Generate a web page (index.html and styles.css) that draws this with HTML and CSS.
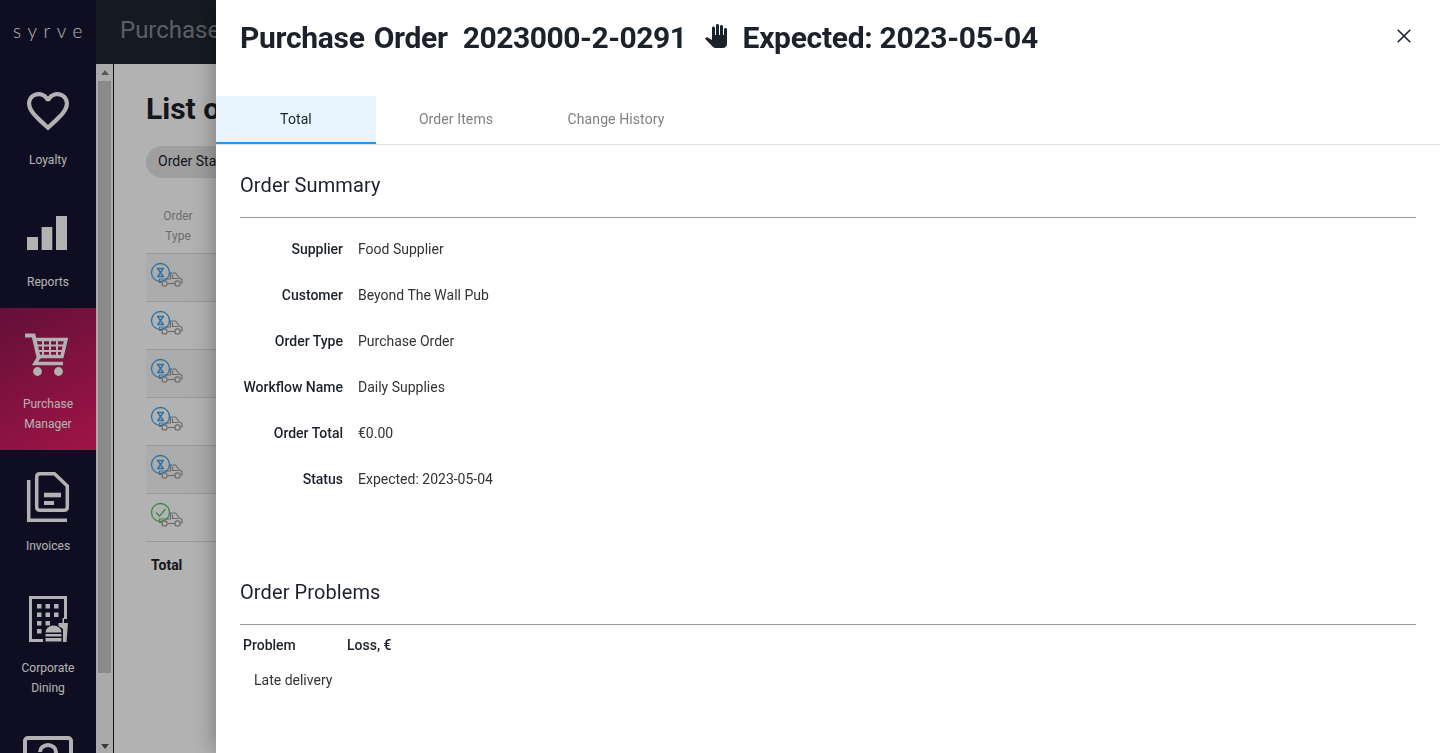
FILE: index.html
```html
<!DOCTYPE html>
<html lang="en">
<head>
<meta charset="UTF-8">
<meta name="viewport" content="width=device-width, initial-scale=1.0">
<title>Purchase Order</title>
<link rel="stylesheet" href="styles.css">
</head>
<body>

<svg class="defs" width="0" height="0">
  <symbol id="truck" viewBox="0 0 34 26">
    <g fill="none" stroke="#9a9a9a" stroke-width="1.200">
      <path d="M11 20.500H9.500V17H20.500V11H25.500L29.500 16C31 16.300 32 17 32 18.500V21H30.500"/>
      <path d="M22.500 12.500V16.500H28.500"/>
      <path d="M18 21.500H25"/>
      <circle cx="14.500" cy="21.500" r="2.600"/>
      <circle cx="27.500" cy="21.500" r="2.600"/>
    </g>
  </symbol>
</svg>

<div class="app">
  <!-- Left navigation -->
  <nav class="sidebar">
    <div class="logo">syrve</div>

    <a class="nav-item">
      <svg class="nav-icon" viewBox="0 0 56 48">
        <g transform="translate(2.800 1.700) scale(2.100)">
          <path d="M16.500 3c-1.740 0-3.410.81-4.500 2.090C10.910 3.810 9.240 3 7.500 3 4.420 3 2 5.420 2 8.500c0 3.780 3.400 6.860 8.550 11.540L12 21.350l1.450-1.320C18.600 15.360 22 12.280 22 8.500 22 5.420 19.580 3 16.500 3zm-4.400 15.550l-.1.1-.1-.1C7.140 14.240 4 11.390 4 8.500 4 6.500 5.500 5 7.500 5c1.540 0 3.040.99 3.570 2.360h1.870C13.460 5.990 14.960 5 16.500 5c2 0 3.500 1.500 3.500 3.500 0 2.890-3.140 5.740-7.900 10.050z"/>
        </g>
      </svg>
      <span>Loyalty</span>
    </a>

    <a class="nav-item">
      <svg class="nav-icon" viewBox="0 0 56 48">
        <rect x="7" y="31" width="11" height="13"/>
        <rect x="21.600" y="21" width="10.700" height="23"/>
        <rect x="36" y="10" width="11" height="34"/>
      </svg>
      <span>Reports</span>
    </a>

    <a class="nav-item active">
      <svg class="nav-icon" viewBox="0 0 56 48">
        <g fill="none" stroke="#fff">
          <path stroke-width="4" d="M5 7.500H13.500L19 31"/>
          <path stroke-width="3.500" d="M14 11.500H46L42 28.500H17"/>
          <path stroke-width="2" d="M23 12V28M30 12V28M37 12V28M15 17.500H44M16 23H43"/>
          <path stroke-width="3.500" d="M19 29L15 35.500H43"/>
        </g>
        <circle cx="17.500" cy="43.500" r="4.400"/>
        <circle cx="38.500" cy="43.500" r="4.400"/>
      </svg>
      <span>Purchase<br>Manager</span>
    </a>

    <a class="nav-item">
      <svg class="nav-icon" viewBox="0 0 56 48">
        <g fill="none" stroke="#fff" stroke-width="3.500">
          <path d="M8.700 10V50.300H47"/>
          <path d="M20 3.700H34.500L47.300 16V37C47.300 39.500 46 40.300 44 40.300H20C18 40.300 16.700 39 16.700 37V7C16.700 5 18 3.700 20 3.700Z"/>
        </g>
        <rect x="24" y="22.700" width="17" height="4.600"/>
        <rect x="24" y="31" width="10" height="4"/>
      </svg>
      <span>Invoices</span>
    </a>

    <a class="nav-item">
      <svg class="nav-icon" viewBox="0 0 56 48">
        <path fill="none" stroke="#fff" stroke-width="3" d="M45.500 27V5.500H10.500V48.500H23"/>
        <rect x="17" y="12" width="4.500" height="4.500"/>
        <rect x="25.500" y="12" width="4.500" height="4.500"/>
        <rect x="34" y="12" width="4.500" height="4.500"/>
        <rect x="17" y="20.500" width="4.500" height="4.500"/>
        <rect x="25.500" y="20.500" width="4.500" height="4.500"/>
        <rect x="34" y="20.500" width="4.500" height="4.500"/>
        <rect x="17" y="29" width="4.500" height="4.500"/>
        <rect x="25.500" y="29" width="4.500" height="4.500"/>
        <rect x="17" y="37" width="4.500" height="4.500"/>
        <path d="M25.500 40.500a8 7 0 0 1 16 0z"/>
        <rect x="25.500" y="42" width="16" height="2.500"/>
        <rect x="25.500" y="46" width="16" height="3.500"/>
        <path d="M38.500 31H42.500V26H44V31H48L46.500 50H43V37L38.500 34Z"/>
      </svg>
      <span>Corporate<br>Dining</span>
    </a>

    <a class="nav-item">
      <svg class="nav-icon" viewBox="0 0 56 48">
        <rect x="5" y="4" width="46" height="46" rx="3" fill="none" stroke="#fff" stroke-width="4"/>
        <path d="M20 18a8 7 0 0 1 16 0c0 5-8 5-8 11" fill="none" stroke="#fff" stroke-width="4"/>
      </svg>
    </a>
  </nav>

  <div class="main">
    <header class="topbar">Purchase</header>

    <div class="workspace">
      <div class="scrollbar">
        <div class="arrow-up"></div>
        <div class="thumb"></div>
        <div class="arrow-down"></div>
      </div>

      <div class="content">
        <h1>List of</h1>
        <div class="filter-pill">Order Status</div>

        <div class="orders">
          <div class="orders-head"><span>Order<br>Type</span></div>
          <div class="order-row shaded"><svg class="order-icon" viewBox="0 0 34 26"><use href="#truck"/><circle class="pending" cx="10.500" cy="10.500" r="9"/><path class="pending" d="M7 6.500H14M7 14.500H14M8 7L13 14M13 7L8 14"/></svg></div>
          <div class="order-row"><svg class="order-icon" viewBox="0 0 34 26"><use href="#truck"/><circle class="pending" cx="10.500" cy="10.500" r="9"/><path class="pending" d="M7 6.500H14M7 14.500H14M8 7L13 14M13 7L8 14"/></svg></div>
          <div class="order-row shaded"><svg class="order-icon" viewBox="0 0 34 26"><use href="#truck"/><circle class="pending" cx="10.500" cy="10.500" r="9"/><path class="pending" d="M7 6.500H14M7 14.500H14M8 7L13 14M13 7L8 14"/></svg></div>
          <div class="order-row"><svg class="order-icon" viewBox="0 0 34 26"><use href="#truck"/><circle class="pending" cx="10.500" cy="10.500" r="9"/><path class="pending" d="M7 6.500H14M7 14.500H14M8 7L13 14M13 7L8 14"/></svg></div>
          <div class="order-row shaded"><svg class="order-icon" viewBox="0 0 34 26"><use href="#truck"/><circle class="pending" cx="10.500" cy="10.500" r="9"/><path class="pending" d="M7 6.500H14M7 14.500H14M8 7L13 14M13 7L8 14"/></svg></div>
          <div class="order-row"><svg class="order-icon" viewBox="0 0 34 26"><use href="#truck"/><circle class="done" cx="10.500" cy="10.500" r="9"/><path class="done" d="M6 10.500L9.500 14L15.500 7"/></svg></div>
          <div class="orders-total">Total</div>
        </div>
      </div>
    </div>
  </div>
</div>

<div class="scrim"></div>

<!-- Purchase order drawer -->
<aside class="drawer">
  <div class="drawer-head">
    <div class="drawer-title">
      <span class="title-name">Purchase Order</span>
      <span class="title-number">2023000-2-0291</span>
      <svg class="hand" viewBox="0 0 24 24"><path d="M23 5.500V20c0 2.200-1.800 4-4 4h-7.300c-1.080 0-2.100-.43-2.850-1.190L1 14.830s1.260-1.230 1.300-1.250c.22-.19.49-.29.79-.29.22 0 .42.06.6.16.04.01 4.310 2.460 4.310 2.460V4c0-.83.67-1.500 1.500-1.500S11 3.170 11 4v7h1V1.500c0-.83.67-1.500 1.500-1.500S15 .67 15 1.500V11h1V2.500c0-.83.67-1.500 1.500-1.500s1.500.67 1.500 1.500V11h1V5.500c0-.83.67-1.500 1.500-1.500s1.500.67 1.500 1.500z"/></svg>
      <span>Expected: 2023-05-04</span>
    </div>
    <svg class="close" viewBox="0 0 14 14"><path d="M.7.7L13.300 13.300M13.300.7L.7 13.300"/></svg>
  </div>

  <div class="tabs">
    <div class="tab active">Total</div>
    <div class="tab">Order Items</div>
    <div class="tab">Change History</div>
  </div>

  <div class="drawer-body">
    <h2>Order Summary</h2>
    <div class="summary">
      <div class="summary-row"><b>Supplier</b><span>Food Supplier</span></div>
      <div class="summary-row"><b>Customer</b><span>Beyond The Wall Pub</span></div>
      <div class="summary-row"><b>Order Type</b><span>Purchase Order</span></div>
      <div class="summary-row"><b>Workflow Name</b><span>Daily Supplies</span></div>
      <div class="summary-row"><b>Order Total</b><span>€0.00</span></div>
      <div class="summary-row"><b>Status</b><span>Expected: 2023-05-04</span></div>
    </div>

    <h2 class="problems-title">Order Problems</h2>
    <div class="problems">
      <b>Problem</b><b>Loss, €</b>
      <span class="problem-name">Late delivery</span><span></span>
    </div>
  </div>
</aside>

</body>
</html>
```

FILE: styles.css
```css
html, body {
  height: 100%;
  margin: 0;
  overflow: hidden;
}
body {
  font-family: Roboto, Arial, sans-serif;
  font-size: 14px;
  color: #1c2229;
  background: #fff;
}
.defs {
  position: absolute;
}
.app {
  display: flex;
  height: 100vh;
}

/* sidebar */
.sidebar {
  width: 96px;
  flex: none;
  background: #151430;
  color: #fff;
  overflow: hidden;
}
.logo {
  height: 64px;
  line-height: 62px;
  text-align: center;
  font-family: Lato, sans-serif;
  font-weight: 300;
  font-size: 19px;
  letter-spacing: 6.500px;
  padding-left: 6px;
}
.nav-item {
  display: flex;
  flex-direction: column;
  align-items: center;
  padding: 20px 0 16px;
  font-size: 12px;
  line-height: 20px;
  text-align: center;
}
.nav-item.active {
  background: linear-gradient(150deg, #8e1753, #e51e64);
}
.nav-icon {
  width: 56px;
  height: 48px;
  margin-bottom: 18px;
  fill: #fff;
  flex: none;
  overflow: visible;
}

/* main area behind the drawer */
.main {
  flex: 1;
  display: flex;
  flex-direction: column;
  min-width: 0;
}
.topbar {
  height: 64px;
  flex: none;
  background: #1f2533;
  color: #848892;
  font-size: 24px;
  line-height: 60px;
  padding-left: 24px;
}
.workspace {
  flex: 1;
  display: flex;
  min-height: 0;
}
.scrollbar {
  width: 17px;
  flex: none;
  display: flex;
  flex-direction: column;
  align-items: center;
  background: #f5f5f5;
  border-right: 1px solid #1a1a1a;
  padding-top: 6px;
}
.arrow-up {
  width: 0;
  height: 0;
  border: 4px solid transparent;
  border-top: 0;
  border-bottom: 5px solid #7d7d7d;
  margin-bottom: 6px;
}
.thumb {
  width: 13px;
  height: 592px;
  background: #c6c6c6;
}
.arrow-down {
  width: 0;
  height: 0;
  border: 4px solid transparent;
  border-bottom: 0;
  border-top: 5px solid #555;
  margin-top: 71px;
}
.content {
  flex: 1;
  padding: 25px 32px;
}
h1 {
  margin: 0;
  font-size: 30px;
  line-height: 40px;
  font-weight: 700;
}
.filter-pill {
  display: inline-block;
  margin-top: 17px;
  height: 32px;
  line-height: 30px;
  padding: 0 12px;
  border-radius: 16px;
  background: #e4e4e4;
}
.orders {
  margin-top: 28px;
}
.orders-head {
  box-sizing: border-box;
  height: 48px;
  font-size: 12px;
  line-height: 20px;
  color: #9b9b9b;
  border-bottom: 1px solid #dcdcdc;
}
.orders-head span {
  display: block;
  width: 64px;
  text-align: center;
}
.order-row {
  box-sizing: border-box;
  height: 48px;
  padding: 8px 0 0 4px;
  border-bottom: 1px solid #dcdcdc;
}
.order-row.shaded {
  background: #f7f7f7;
}
.order-icon {
  display: block;
  width: 34px;
  height: 26px;
}
.pending, .done {
  fill: none;
  stroke-width: 1.300;
}
.pending {
  stroke: #3ca4f0;
}
.done {
  stroke: #4cc46a;
}
.orders-total {
  font-weight: 700;
  padding: 13px 0 0 5px;
  line-height: 20px;
}

.scrim {
  position: fixed;
  inset: 0;
  background: rgba(0, 0, 0, 0.3);
}

/* drawer */
.drawer {
  position: fixed;
  top: 0;
  bottom: 0;
  left: 216px;
  right: 0;
  background: #fff;
  box-shadow: 0 0 24px rgba(0, 0, 0, 0.35);
}
.drawer-head {
  height: 96px;
  box-sizing: border-box;
  padding: 14px 24px 0;
  display: flex;
  justify-content: space-between;
}
.drawer-title {
  display: flex;
  align-items: center;
  gap: 15px;
  height: 46px;
  font-size: 30px;
  font-weight: 700;
  letter-spacing: -0.3px;
}
.title-name {
  word-spacing: 2px;
}
.title-number {
  letter-spacing: -0.450px;
}
.hand {
  width: 24px;
  height: 24px;
  margin: 0 0 2px 2px;
  fill: #1c2229;
}
.close {
  width: 14px;
  height: 14px;
  margin: 15px 5px 0 0;
  fill: none;
  stroke: #1c2229;
  stroke-width: 1.600;
}
.tabs {
  display: flex;
  border-bottom: 1px solid #e0e0e0;
}
.tab {
  width: 160px;
  height: 48px;
  box-sizing: border-box;
  line-height: 47px;
  text-align: center;
  color: #808080;
  letter-spacing: 0.1px;
}
.tab.active {
  background: #e8f4fe;
  color: #1c2229;
  border-bottom: 2px solid #2196f3;
}
.drawer-body {
  padding: 26px 24px 0;
}
h2 {
  margin: 0;
  font-size: 20px;
  line-height: 28px;
  font-weight: 400;
  padding-bottom: 18px;
  border-bottom: 1px solid #999;
  letter-spacing: 0.1px;
}
.problems-title {
  margin-top: 76px;
}
.summary {
  padding-top: 8px;
}
.summary-row {
  display: flex;
  align-items: center;
  height: 46px;
  gap: 15px;
}
.summary-row b {
  width: 103px;
  text-align: right;
  font-weight: 500;
}
.summary-row span {
  color: #333;
}
.problems {
  display: grid;
  grid-template-columns: 104px 1fr;
  row-gap: 15px;
  line-height: 20px;
  padding: 10px 0 0 3px;
}
.problems b {
  font-weight: 500;
}
.problem-name {
  padding-left: 11px;
  white-space: nowrap;
  color: #333;
}
```
